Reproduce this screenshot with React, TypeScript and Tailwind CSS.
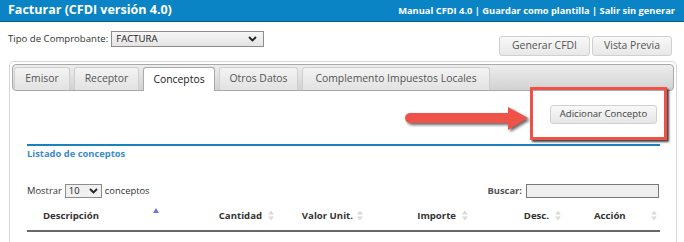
import React from 'react';

const font = { fontFamily: '"Open Sans", "Liberation Sans", Arial, sans-serif' };

const Chevron = ({ className = '' }: { className?: string }) => (
  <svg width="9" height="6" viewBox="0 0 9 6" className={className}>
    <polyline points="1,1 4.5,4.5 8,1" fill="none" stroke="#222" strokeWidth="1.8" />
  </svg>
);

const SortBoth = () => (
  <svg width="6" height="11" viewBox="0 0 6 11">
    <path d="M0 4.5 3 0.5 6 4.5Z M0 6.5 3 10.5 6 6.5Z" fill="#dadada" />
  </svg>
);

const SortAsc = () => (
  <svg width="6" height="5" viewBox="0 0 6 5" className="-mt-[10px]">
    <path d="M0 5 3 0 6 5Z" fill="#7272d8" />
  </svg>
);

const tabs = [
  { label: 'Emisor', w: 'w-[56px]' },
  { label: 'Receptor', w: 'w-[65px]' },
  { label: 'Conceptos', w: 'w-[72px]', active: true },
  { label: 'Otros Datos', w: 'w-[79px]' },
  { label: 'Complemento Impuestos Locales', w: 'w-[188px]' },
];

const App = () => {
  return (
    <div className="relative w-[684px] h-[242px] overflow-hidden bg-white text-[#333]" style={font}>
      {/* barra superior */}
      <div className="h-[22px] bg-[#0b84c5] border-b border-[#05598a] flex items-center justify-between pl-[8px] pr-[9px]">
        <span className="text-white font-bold text-[12.5px]">Facturar (CFDI versión 4.0)</span>
        <span className="text-white font-bold text-[9.3px]">
          Manual CFDI 4.0 | Guardar como plantilla | Salir sin generar
        </span>
      </div>

      <div className="flex justify-between items-start pt-[9px] pb-[5px] pl-[8px] pr-[12px]">
        <div className="flex items-center text-[9.6px]">
          <span>Tipo de Comprobante:</span>
          <div className="ml-[3px] w-[153px] h-[16px] border border-[#8c8c8c] bg-gradient-to-b from-[#f6f6f6] to-[#e4e4e4] flex items-center justify-between pl-[4px] pr-[6px] text-[#222]">
            <span>FACTURA</span>
            <Chevron />
          </div>
        </div>
        <div className="mt-[5px] flex gap-[2px] text-[10.4px] text-[#555]">
          <button className="w-[91px] h-[20px] rounded-[3px] border border-[#d0d0d0] bg-gradient-to-b from-[#f8f8f8] to-[#e8e8e8]">
            Generar CFDI
          </button>
          <button className="w-[80px] h-[20px] rounded-[3px] border border-[#d0d0d0] bg-gradient-to-b from-[#f8f8f8] to-[#e8e8e8]">
            Vista Previa
          </button>
        </div>
      </div>

      {/* panel de pestañas */}
      <div className="ml-[9px] mr-[7px] border border-[#d6d6d6] rounded-[5px] p-[2px] h-[200px]">
        <div className="h-[27px] border border-[#a9a9a9] rounded-[4px] bg-gradient-to-b from-[#ededed] to-[#d2d2d2] flex items-end pl-[1px] gap-[4px]">
          {tabs.map((t) =>
            t.active ? (
              <div
                key={t.label}
                className={`${t.w} h-[24px] -mb-[1px] rounded-t-[3px] border border-b-0 border-[#aaaaaa] bg-white flex items-center justify-center text-[10.4px] text-[#222]`}
              >
                {t.label}
              </div>
            ) : (
              <div
                key={t.label}
                className={`${t.w} h-[23px] rounded-t-[3px] border border-b-0 border-[#cfcfcf] bg-gradient-to-b from-[#f3f3f3] to-[#e2e2e2] flex items-center justify-center text-[10.4px] text-[#555]`}
              >
                {t.label}
              </div>
            )
          )}
        </div>

        <div className="pl-[15px] pr-[14px]">
          <div className="flex justify-end pt-[14px] pr-[3px]">
            <button className="w-[107px] h-[19px] rounded-[3px] border border-[#d0d0d0] bg-gradient-to-b from-[#f8f8f8] to-[#e6e6e6] text-[9.6px] text-[#444]">
              Adicionar Concepto
            </button>
          </div>

          <div className="mt-[20px] h-[2px] bg-[#1a80c1]" />
          <div className="mt-[1px] h-[14px] flex items-center text-[9.4px] font-bold text-[#3b8bcb]">
            Listado de conceptos
          </div>

          <div className="mt-[23px] h-[14px] flex items-center justify-between text-[9.4px]">
            <div className="flex items-center">
              <span>Mostrar</span>
              <div className="ml-[3px] w-[37px] h-[14px] border border-[#8c8c8c] bg-[#f0f0f0] flex items-center justify-between pl-[3px] pr-[3px] text-[#222]">
                <span>10</span>
                <Chevron />
              </div>
              <span className="ml-[3px]">conceptos</span>
            </div>
            <div className="flex items-center mr-[1px]">
              <span className="font-bold text-[#555]">Buscar:</span>
              <div className="ml-[4px] w-[133px] h-[14px] border border-[#777] bg-[#efefef]" />
            </div>
          </div>

          <div className="h-[34px] pt-[4px] flex items-center border-b-2 border-[#686868] text-[9.6px] font-bold text-[#333]">
            <div className="w-[138px] flex items-center justify-between pl-[16px] pr-[6px]">
              <span>Descripción</span>
              <SortAsc />
            </div>
            <div className="w-[115px] flex items-center justify-end gap-[6px] pr-[6px]">
              <span>Cantidad</span>
              <SortBoth />
            </div>
            <div className="w-[89px] flex items-center justify-end gap-[4px] pr-[6px]">
              <span>Valor Unit.</span>
              <SortBoth />
            </div>
            <div className="w-[105px] flex items-center justify-end gap-[6px] pr-[6px]">
              <span>Importe</span>
              <SortBoth />
            </div>
            <div className="w-[93px] flex items-center justify-end gap-[6px] pr-[6px]">
              <span>Desc.</span>
              <SortBoth />
            </div>
            <div className="flex-1 flex items-center justify-between pl-[27px] pr-[3px]">
              <span>Acción</span>
              <SortBoth />
            </div>
          </div>
        </div>
      </div>

      {/* anotación: recuadro rojo y flecha */}
      <div className="absolute left-[530px] top-[87px] w-[137px] h-[53px] border-[3px] border-[#ef5249] shadow-[2px_2px_2px_rgba(0,0,0,0.75)]" />
      <svg
        className="absolute left-[400px] top-[103px] drop-shadow-[2px_2px_1.5px_rgba(0,0,0,0.6)]"
        width="135"
        height="32"
        viewBox="0 0 135 32"
      >
        <rect x="5" y="10" width="108" height="10" rx="5" fill="#ef5249" />
        <path d="M108 4 L128 15 L108 27 Z" fill="#ef5249" />
      </svg>
    </div>
  );
};

export default App;
